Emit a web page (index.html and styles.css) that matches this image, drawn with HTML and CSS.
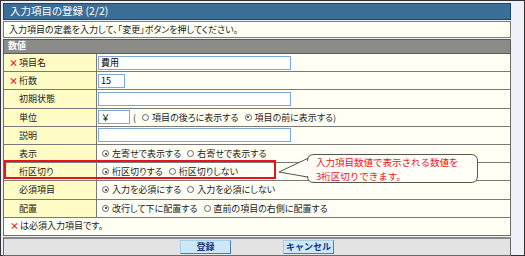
FILE: index.html
```html
<!DOCTYPE html>
<html lang="ja">
<head>
    <meta charset="UTF-8">
    <title>入力項目の登録</title>
    <link rel="stylesheet" href="styles.css">
</head>
<body>
    <div class="frame">
        <div class="panel">
            <div class="title">入力項目の登録 (2/2)</div>
            <div class="desc">入力項目の定義を入力して、「変更」ボタンを押してください。</div>
            <div class="section">数値</div>
            <div class="form">
                <div class="row">
                    <div class="label"><span class="req">×</span>項目名</div>
                    <div class="value"><input class="text wide" type="text" value="費用"></div>
                </div>
                <div class="row">
                    <div class="label"><span class="req">×</span>桁数</div>
                    <div class="value"><input class="text short" type="text" value="15"></div>
                </div>
                <div class="row">
                    <div class="label">初期状態</div>
                    <div class="value"><input class="text wide" type="text" value=""></div>
                </div>
                <div class="row">
                    <div class="label">単位</div>
                    <div class="value">
                        <input class="text unit" type="text" value="￥">
                        <span class="paren">(</span>
                        <span class="radio"></span><span class="opt">項目の後ろに表示する</span>
                        <span class="radio on"></span><span class="opt">項目の前に表示する)</span>
                    </div>
                </div>
                <div class="row">
                    <div class="label">説明</div>
                    <div class="value"><input class="text wide" type="text" value=""></div>
                </div>
                <div class="row">
                    <div class="label">表示</div>
                    <div class="value">
                        <span class="radio on"></span><span class="opt">左寄せで表示する</span>
                        <span class="radio"></span><span class="opt">右寄せで表示する</span>
                    </div>
                </div>
                <div class="row">
                    <div class="label">桁区切り</div>
                    <div class="value">
                        <span class="radio on"></span><span class="opt">桁区切りする</span>
                        <span class="radio"></span><span class="opt">桁区切りしない</span>
                    </div>
                </div>
                <div class="row">
                    <div class="label">必須項目</div>
                    <div class="value">
                        <span class="radio on"></span><span class="opt">入力を必須にする</span>
                        <span class="radio"></span><span class="opt">入力を必須にしない</span>
                    </div>
                </div>
                <div class="row">
                    <div class="label">配置</div>
                    <div class="value">
                        <span class="radio on"></span><span class="opt">改行して下に配置する</span>
                        <span class="radio"></span><span class="opt">直前の項目の右側に配置する</span>
                    </div>
                </div>
                <div class="note"><span class="req">×</span>は必須入力項目です。</div>
            </div>
            <div class="buttons">
                <button class="btn">登録</button>
                <button class="btn">キャンセル</button>
            </div>

            <div class="highlight"></div>
            <div class="callout">
                <svg width="206" height="32" viewBox="0 0 206 32">
                    <path d="M39 1.5 H196 Q202.5 1.5 202.5 8 V23 Q202.5 29.5 196 29.5 H39 Q32.5 29.5 32.5 23 V24 L4 19 L32.5 5.5 V8 Q32.5 1.5 39 1.5 Z" fill="#fffff8" stroke="#555" stroke-width="1"/>
                </svg>
                <div class="callout-text">
                    <div>入力項目数値で表示される数値を</div>
                    <div>3桁区切りできます。</div>
                </div>
            </div>
        </div>
    </div>
</body>
</html>
```

FILE: styles.css
```css
html, body{
    margin : 0;
    padding : 0;
}
body{
    font-family: "Noto Sans CJK JP", sans-serif;
    font-size : 9px;
    font-feature-settings: "palt";
    color : #222;
}
.frame{
    box-sizing: border-box;
    width : 525px;
    height : 256px;
    border : 1px solid #333;
    background : #eef2f8;
    padding : 2px 0 0 2px;
}
.panel{
    position: relative;
    width : 508px;
}
.title{
    box-sizing: border-box;
    height : 17px;
    line-height: 14px;
    background : #3b6e96;
    border : 1px solid #25445e;
    color : white;
    font-size : 10.5px;
    padding-left : 6px;
}
.desc{
    box-sizing: border-box;
    height : 17px;
    margin-top : 1px;
    line-height: 15px;
    background : #fffff4;
    border : 1px solid #7c7c7c;
    padding-left : 5px;
}
.section{
    box-sizing: border-box;
    height : 15px;
    margin-top : 1px;
    line-height: 12px;
    background : #8b8c87;
    border : 1px solid #5a5a5a;
    color : white;
    font-weight: bold;
    padding-left : 4px;
}
.form{
    border-left : 1px solid #6e6e6e;
    border-right : 1px solid #6e6e6e;
    border-bottom : 1px solid #6e6e6e;
}
.row{
    display : grid;
    grid-template-columns: 93px 1fr;
    border-bottom : 1px solid #7a7a7a;
    box-sizing: border-box;
    height : 18.2px;
}
.label{
    background : #fffcc6;
    border-right : 1px solid #7a7a7a;
    display : flex;
    align-items: center;
    padding-left : 15px;
}
.req{
    color : #e0202a;
    font-weight: bold;
    margin-left : -10px;
    width : 10px;
}
.value{
    background : #fffff4;
    display : flex;
    align-items: center;
    padding-left : 1px;
}
.text{
    box-sizing: border-box;
    height : 14px;
    border : 1px solid #7ea8da;
    background : white;
    font-family: inherit;
    font-size : 9px;
    padding : 0 2px;
    margin : 0;
    outline : none;
}
.wide{ width : 193px; }
.short{ width : 27px; }
.unit{ width : 32px; }
.paren{
    margin : 0 2px 0 3px;
}
.radio{
    box-sizing: border-box;
    width : 7px;
    height : 7px;
    border : 1px solid #666;
    border-radius: 50%;
    background : white;
    margin : 0 3px 0 4px;
    position: relative;
}
.radio.on::after{
    content : "";
    position: absolute;
    left : 1.5px;
    top : 1.5px;
    width : 2px;
    height : 2px;
    border-radius: 50%;
    background : #222;
}
.opt{
    margin-right : 2px;
}
.note{
    background : #fffff4;
    height : 17px;
    line-height: 16px;
    padding-left : 15px;
}
.note .req{
    display : inline-block;
    margin-left : -9px;
}
.buttons{
    box-sizing: border-box;
    height : 19px;
    margin-top : 1px;
    background : #e3e3e3;
    border : 1px solid #6a6a6a;
    border-top : 2px solid #8a8a8a;
    display : flex;
    justify-content: center;
    align-items: center;
    gap : 52px;
}
.btn{
    box-sizing: border-box;
    width : 51px;
    height : 14px;
    padding : 0;
    background : #cde9f7;
    border : 1px solid #4f7fa3;
    border-top-color : #a9cde3;
    border-left-color : #a9cde3;
    color : #1b3580;
    font-family: inherit;
    font-size : 9px;
    font-weight: bold;
    line-height: 12px;
}
.highlight{
    position: absolute;
    left : 1px;
    top : 157px;
    width : 272px;
    height : 19px;
    box-sizing: border-box;
    border : 2px solid #e8141c;
}
.callout{
    position: absolute;
    left : 272px;
    top : 150px;
    width : 206px;
    height : 32px;
}
.callout svg{
    position: absolute;
    left : 0;
    top : 0;
}
.callout-text{
    position: absolute;
    left : 41px;
    top : 2px;
    color : #e8141c;
    font-size : 9.5px;
    line-height: 14px;
    font-feature-settings: normal;
    white-space: nowrap;
}
.callout-text div{
    height : 14px;
}
```
